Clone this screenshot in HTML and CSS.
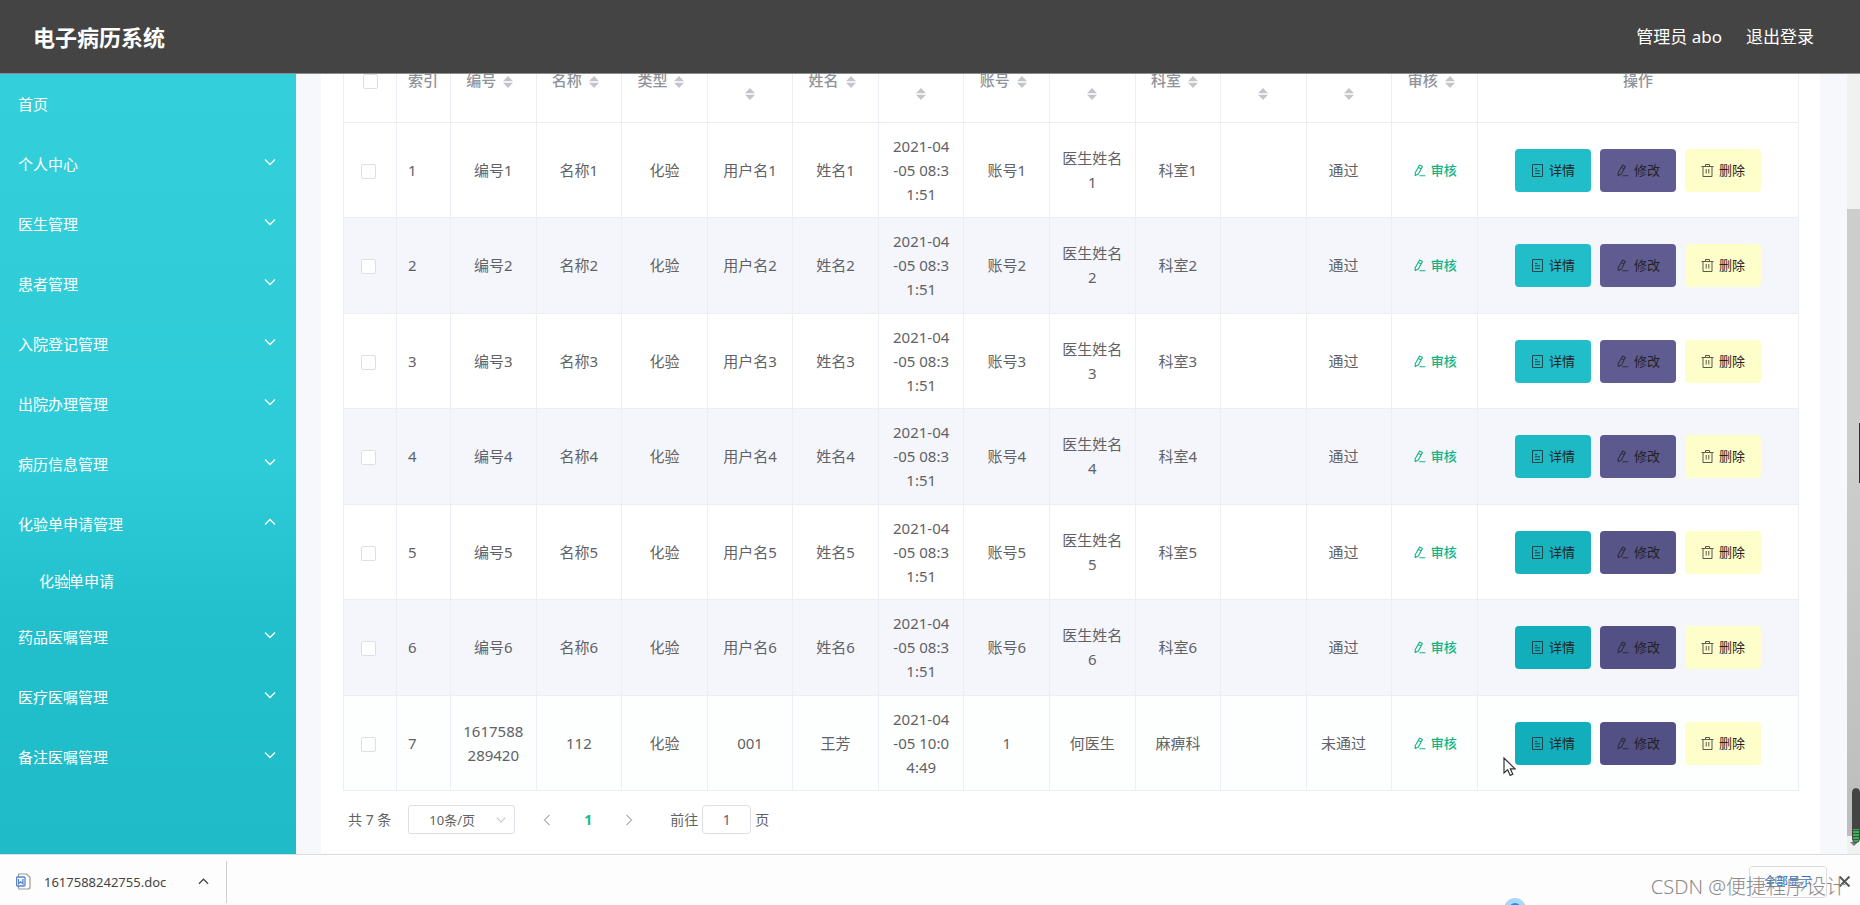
FILE: index.html
```html
<!DOCTYPE html>
<html lang="zh-CN">
<head>
<meta charset="utf-8">
<title>电子病历系统</title>
<link rel="stylesheet" href="styles.css">
</head>
<body>
<svg class="sprite" aria-hidden="true">
  <symbol id="i-down" viewBox="0 0 12 12"><path d="M1 3.5 6 8.5 11 3.5" fill="none" stroke="currentColor" stroke-width="1.3"/></symbol>
  <symbol id="i-up" viewBox="0 0 12 12"><path d="M1 8.5 6 3.5 11 8.5" fill="none" stroke="currentColor" stroke-width="1.3"/></symbol>
  <symbol id="i-left" viewBox="0 0 12 12"><path d="M8.5 1 3.5 6 8.5 11" fill="none" stroke="currentColor" stroke-width="1.4"/></symbol>
  <symbol id="i-right" viewBox="0 0 12 12"><path d="M3.5 1 8.5 6 3.5 11" fill="none" stroke="currentColor" stroke-width="1.4"/></symbol>
  <symbol id="i-sort" viewBox="0 0 10 12"><path d="M5 0 10 5.2H0zM5 12 0 6.8h10z" fill="currentColor"/></symbol>
  <symbol id="i-edit" viewBox="0 0 13 13"><path d="M6.6 1 9.4 2.4 5.4 10 2.2 11.6 2.2 8.8zM5.4 3.4 8 4.8M6.4 11.8H12.4" fill="none" stroke="currentColor" stroke-width="1.1" stroke-linejoin="round"/></symbol>
  <symbol id="i-doc" viewBox="0 0 13 13"><path d="M1.5.5h10v12h-10zM4 4.5h2.2M4 6.8h5M4 9.5h5" fill="none" stroke="currentColor" stroke-width="1"/></symbol>
  <symbol id="i-trash" viewBox="0 0 13 13"><path d="M.5 2.5h12M2 2.5v10h9v-10M4.5 2.5v-2h4v2M5.2 5v4.5M7.8 5v4.5" fill="none" stroke="currentColor" stroke-width="1"/></symbol>
</svg>

<header class="topbar">
  <h1 class="brand">电子病历系统</h1>
  <nav class="account"><span>管理员 abo</span><a href="#logout">退出登录</a></nav>
</header>

<div class="middle">
  <nav class="sidebar">
    <a class="item" href="#home">首页</a>
    <button class="item" type="button">个人中心<svg class="chev"><use href="#i-down"/></svg></button>
    <button class="item" type="button">医生管理<svg class="chev"><use href="#i-down"/></svg></button>
    <button class="item" type="button">患者管理<svg class="chev"><use href="#i-down"/></svg></button>
    <button class="item" type="button">入院登记管理<svg class="chev"><use href="#i-down"/></svg></button>
    <button class="item" type="button">出院办理管理<svg class="chev"><use href="#i-down"/></svg></button>
    <button class="item" type="button">病历信息管理<svg class="chev"><use href="#i-down"/></svg></button>
    <button class="item" type="button" aria-expanded="true">化验单申请管理<svg class="chev"><use href="#i-up"/></svg></button>
    <a class="item sub" href="#lab">化验单申请<i class="ibeam"></i></a>
    <button class="item" type="button">药品医嘱管理<svg class="chev"><use href="#i-down"/></svg></button>
    <button class="item" type="button">医疗医嘱管理<svg class="chev"><use href="#i-down"/></svg></button>
    <button class="item" type="button">备注医嘱管理<svg class="chev"><use href="#i-down"/></svg></button>
  </nav>

  <main class="content">
    <section class="panel">
      <table class="grid">
        <colgroup><col class="c-check"><col class="c-index"><col span="12"><col class="c-ops"></colgroup>
        <thead>
          <tr>
            <th><input class="check" type="checkbox" aria-label="全选"></th>
            <th class="left">索引</th>
            <th>编号<span class="sort"><svg><use href="#i-sort"/></svg></span></th>
            <th>名称<span class="sort"><svg><use href="#i-sort"/></svg></span></th>
            <th>类型<span class="sort"><svg><use href="#i-sort"/></svg></span></th>
            <th><br><span class="sort"><svg><use href="#i-sort"/></svg></span></th>
            <th>姓名<span class="sort"><svg><use href="#i-sort"/></svg></span></th>
            <th><br><span class="sort"><svg><use href="#i-sort"/></svg></span></th>
            <th>账号<span class="sort"><svg><use href="#i-sort"/></svg></span></th>
            <th><br><span class="sort"><svg><use href="#i-sort"/></svg></span></th>
            <th>科室<span class="sort"><svg><use href="#i-sort"/></svg></span></th>
            <th><br><span class="sort"><svg><use href="#i-sort"/></svg></span></th>
            <th><br><span class="sort"><svg><use href="#i-sort"/></svg></span></th>
            <th>审核<span class="sort"><svg><use href="#i-sort"/></svg></span></th>
            <th>操作</th>
          </tr>
        </thead>
        <tbody>
          <tr><td class="pick"><input class="check" type="checkbox" aria-label="选择 1"></td><td class="left">1</td><td>编号1</td><td>名称1</td><td>化验</td><td>用户名1</td><td>姓名1</td><td>2021-04<br>-05 08:3<br>1:51</td><td>账号1</td><td>医生姓名<br>1</td><td>科室1</td><td></td><td class="state">通过</td><td><button class="audit" type="button"><svg><use href="#i-edit"/></svg>审核</button></td><td><div class="ops"><button class="btn view" type="button"><svg><use href="#i-doc"/></svg>详情</button><button class="btn edit" type="button"><svg><use href="#i-edit"/></svg>修改</button><button class="btn del" type="button"><svg><use href="#i-trash"/></svg>删除</button></div></td></tr>
          <tr><td class="pick"><input class="check" type="checkbox" aria-label="选择 2"></td><td class="left">2</td><td>编号2</td><td>名称2</td><td>化验</td><td>用户名2</td><td>姓名2</td><td>2021-04<br>-05 08:3<br>1:51</td><td>账号2</td><td>医生姓名<br>2</td><td>科室2</td><td></td><td class="state">通过</td><td><button class="audit" type="button"><svg><use href="#i-edit"/></svg>审核</button></td><td><div class="ops"><button class="btn view" type="button"><svg><use href="#i-doc"/></svg>详情</button><button class="btn edit" type="button"><svg><use href="#i-edit"/></svg>修改</button><button class="btn del" type="button"><svg><use href="#i-trash"/></svg>删除</button></div></td></tr>
          <tr><td class="pick"><input class="check" type="checkbox" aria-label="选择 3"></td><td class="left">3</td><td>编号3</td><td>名称3</td><td>化验</td><td>用户名3</td><td>姓名3</td><td>2021-04<br>-05 08:3<br>1:51</td><td>账号3</td><td>医生姓名<br>3</td><td>科室3</td><td></td><td class="state">通过</td><td><button class="audit" type="button"><svg><use href="#i-edit"/></svg>审核</button></td><td><div class="ops"><button class="btn view" type="button"><svg><use href="#i-doc"/></svg>详情</button><button class="btn edit" type="button"><svg><use href="#i-edit"/></svg>修改</button><button class="btn del" type="button"><svg><use href="#i-trash"/></svg>删除</button></div></td></tr>
          <tr><td class="pick"><input class="check" type="checkbox" aria-label="选择 4"></td><td class="left">4</td><td>编号4</td><td>名称4</td><td>化验</td><td>用户名4</td><td>姓名4</td><td>2021-04<br>-05 08:3<br>1:51</td><td>账号4</td><td>医生姓名<br>4</td><td>科室4</td><td></td><td class="state">通过</td><td><button class="audit" type="button"><svg><use href="#i-edit"/></svg>审核</button></td><td><div class="ops mid"><button class="btn view" type="button"><svg><use href="#i-doc"/></svg>详情</button><button class="btn edit" type="button"><svg><use href="#i-edit"/></svg>修改</button><button class="btn del" type="button"><svg><use href="#i-trash"/></svg>删除</button></div></td></tr>
          <tr><td class="pick"><input class="check" type="checkbox" aria-label="选择 5"></td><td class="left">5</td><td>编号5</td><td>名称5</td><td>化验</td><td>用户名5</td><td>姓名5</td><td>2021-04<br>-05 08:3<br>1:51</td><td>账号5</td><td>医生姓名<br>5</td><td>科室5</td><td></td><td class="state">通过</td><td><button class="audit" type="button"><svg><use href="#i-edit"/></svg>审核</button></td><td><div class="ops deep"><button class="btn view" type="button"><svg><use href="#i-doc"/></svg>详情</button><button class="btn edit" type="button"><svg><use href="#i-edit"/></svg>修改</button><button class="btn del" type="button"><svg><use href="#i-trash"/></svg>删除</button></div></td></tr>
          <tr><td class="pick"><input class="check" type="checkbox" aria-label="选择 6"></td><td class="left">6</td><td>编号6</td><td>名称6</td><td>化验</td><td>用户名6</td><td>姓名6</td><td>2021-04<br>-05 08:3<br>1:51</td><td>账号6</td><td>医生姓名<br>6</td><td>科室6</td><td></td><td class="state">通过</td><td><button class="audit" type="button"><svg><use href="#i-edit"/></svg>审核</button></td><td><div class="ops deeper"><button class="btn view" type="button"><svg><use href="#i-doc"/></svg>详情</button><button class="btn edit" type="button"><svg><use href="#i-edit"/></svg>修改</button><button class="btn del" type="button"><svg><use href="#i-trash"/></svg>删除</button></div></td></tr>
          <tr class="hovered"><td class="pick"><input class="check" type="checkbox" aria-label="选择 7"></td><td class="left">7</td><td>1617588<br>289420</td><td>112</td><td>化验</td><td>001</td><td>王芳</td><td>2021-04<br>-05 10:0<br>4:49</td><td>1</td><td>何医生</td><td>麻痹科</td><td></td><td class="state">未通过</td><td><button class="audit" type="button"><svg><use href="#i-edit"/></svg>审核</button></td><td><div class="ops deeper"><button class="btn view" type="button"><svg><use href="#i-doc"/></svg>详情</button><button class="btn edit" type="button"><svg><use href="#i-edit"/></svg>修改</button><button class="btn del" type="button"><svg><use href="#i-trash"/></svg>删除</button></div></td></tr>
        </tbody>
      </table>

      <div class="pager">
        <span class="total">共 7 条</span>
        <div class="size">
          <select aria-label="每页条数"><option>10条/页</option></select>
          <svg><use href="#i-down"/></svg>
        </div>
        <button class="step" type="button" aria-label="上一页"><svg><use href="#i-left"/></svg></button>
        <button class="step current" type="button">1</button>
        <button class="step" type="button" aria-label="下一页"><svg><use href="#i-right"/></svg></button>
        <label class="jump">前往<input type="text" value="1">页</label>
      </div>
    </section>
  </main>

  <div class="scrollbar">
    <div class="thumb"></div>
    <svg class="arrow" viewBox="0 0 8 4"><path d="M0 0h8L4 4z" fill="#777"/></svg>
    <i class="edge"></i>
    <i class="meter"></i>
  </div>
</div>

<footer class="downloads">
  <div class="file">
    <svg class="word" viewBox="0 0 15 17"><path d="M3.5 1h7l3.5 3.2V14a2 2 0 0 1-2 2H3.5a1 1 0 0 1-1-1V2a1 1 0 0 1 1-1z" fill="#fff" stroke="#999" stroke-width="1.2"/><rect x=".5" y="4" width="8.5" height="9" rx="1" fill="#fff" stroke="#5583cb" stroke-width="1.3"/><path d="M2.5 6v4.8l2.2-2 2.2 2V6" fill="none" stroke="#5583cb" stroke-width="1.3"/></svg>
    <span class="name">1617588242755.doc</span>
    <button class="more" type="button" aria-label="更多"><svg><use href="#i-up"/></svg></button>
  </div>
  <button class="all" type="button">全部显示</button>
  <button class="close" type="button" aria-label="关闭"><svg viewBox="0 0 10 10"><path d="M.5.5l9 9M9.5.5l-9 9" stroke="#555" stroke-width="1.8"/></svg></button>
  <span class="watermark">CSDN @便捷程序设计</span>
  <i class="bubble"></i>
</footer>

<svg class="pointer" viewBox="0 0 13 20"><path d="M1 1v15l3.6-3.2 2.6 5.6 2.6-1.2-2.5-5.4H12z" fill="#fff" stroke="#333" stroke-width="1.2"/></svg>
</body>
</html>
```

FILE: styles.css
```css
* { box-sizing: border-box; }

body {
  margin: 0;
  height: 100vh;
  display: flex;
  flex-direction: column;
  overflow: hidden;
  position: relative;
  background: #fff;
  color: #606266;
  font: 15px/24px "Noto Sans", "Noto Sans CJK SC", sans-serif;
}

button, input, select {
  margin: 0;
  padding: 0;
  border: 0;
  background: none;
  color: inherit;
  font: inherit;
}

a { color: inherit; text-decoration: none; }
svg { display: block; }
.sprite { display: none; }

/* top bar */
.topbar {
  flex: none;
  display: flex;
  align-items: center;
  justify-content: space-between;
  height: 74px;
  padding: 0 46px 0 33px;
  border-bottom: 1px solid #8a8a8a;
  background: #444;
  color: #fff;
}
.brand { margin: 0; font-size: 22px; font-weight: 700; }
.account { display: flex; gap: 24px; font-size: 17px; }

.middle { flex: 1; min-height: 0; display: flex; }

/* side menu */
.sidebar {
  flex: none;
  width: 296px;
  background: linear-gradient(#33cfdb, #2eccd8 50%, #22c0cc 70%, #1fbbc8);
  color: #fff;
}
.item {
  display: flex;
  align-items: center;
  justify-content: space-between;
  width: 100%;
  height: 60px;
  padding: 0 20px 0 18px;
  text-align: left;
}
.item.sub { position: relative; height: 53px; padding-left: 39px; }
.chev { width: 12px; height: 12px; margin-bottom: 4px; }
.ibeam { position: absolute; left: 69px; top: 16px; width: 1px; height: 20px; background: #fff; }

/* content */
.content {
  flex: 1;
  min-width: 0;
  overflow: hidden;
  padding: 0 27px 0 25px;
  background: #f6f8fb;
}
.panel { min-height: 100%; padding: 0 21px 0 22px; background: #fff; }

.grid {
  width: 100%;
  margin-top: -36px;
  table-layout: fixed;
  border-spacing: 0;
  border-left: 1px solid #ebeef5;
}
.c-check { width: 53px; }
.c-index { width: 54px; }
.c-ops { width: 321px; }
.grid th, .grid td {
  padding: 11px 0;
  border-right: 1px solid #ebeef5;
  border-bottom: 1px solid #ebeef5;
  text-align: center;
  vertical-align: middle;
}
.grid th { height: 85px; padding: 0; color: #909399; font-weight: 500; }
.grid tr:nth-child(even) td { padding-bottom: 12px; background: #f5f6fb; }
.grid tr.hovered td { background: #fdfffe; }
.grid .left { padding-left: 11px; text-align: left; }
.grid .pick { padding-left: 17px; text-align: left; }
.grid .state { padding-right: 11px; }

.sort { display: inline-block; width: 24px; vertical-align: middle; color: #c3c5ca; }
.sort svg { width: 10px; height: 12px; margin: 0 auto; }

.check {
  appearance: none;
  display: inline-block;
  width: 15px;
  height: 15px;
  border: 1px solid #dcdfe6;
  border-radius: 2px;
  background: #fff;
  vertical-align: middle;
}

.audit, .btn {
  display: inline-flex;
  align-items: center;
  justify-content: center;
  gap: 5px;
  font-size: 13px;
  line-height: 20px;
}
.audit { color: #14b385; font-weight: 500; vertical-align: top; line-height: 24px; }
.audit svg, .btn svg { width: 13px; height: 13px; }

.ops { display: flex; justify-content: center; gap: 9px; }
.btn { width: 76px; height: 43px; border-radius: 4px; color: #222; }
.btn svg { opacity: .75; }
.view { background: #21bdc9; }
.edit { background: #605c92; }
.del { background: #fefecb; }
.mid .view { background: #1dbac6; }
.mid .edit { background: #5c598e; }
.deep .view { background: #17b3bf; }
.deep .edit { background: #575488; }
.deeper .view { background: #12aebb; }
.deeper .edit { background: #535085; }

/* pagination */
.pager {
  display: flex;
  align-items: center;
  padding: 14px 5px 19px;
  font-size: 14px;
}
.size { position: relative; width: 107px; margin: 0 16px 0 17px; }
.size select {
  appearance: none;
  display: block;
  width: 100%;
  height: 29px;
  padding-left: 20px;
  border: 1px solid #dcdfe6;
  border-radius: 3px;
  font-size: 13px;
}
.size svg { position: absolute; right: 9px; top: 10px; width: 10px; height: 10px; color: #c0c4cc; }
.step { display: flex; align-items: center; justify-content: center; width: 32px; height: 29px; margin-right: 9px; color: #b4b8c0; }
.step svg { width: 12px; height: 12px; }
.step.current { color: #14b98a; font-weight: 700; }
.jump { display: flex; align-items: center; gap: 4px; margin-left: 16px; }
.jump input { width: 49px; height: 29px; border: 1px solid #dcdfe6; border-radius: 4px; text-align: center; }

/* scrollbar */
.scrollbar {
  position: relative;
  flex: none;
  display: flex;
  flex-direction: column;
  align-items: center;
  width: 13px;
  padding-top: 135px;
  background: #f1f1f1;
}
.thumb { flex: 1; width: 100%; background: linear-gradient(#cdcdcd 40%, #bdbdbd); }
.arrow { width: 8px; height: 4px; margin: 6px 0 8px; }
.edge { position: absolute; right: 0; top: 349px; width: 1px; height: 60px; background: #333; }
.meter {
  position: absolute;
  right: 0;
  bottom: 11px;
  width: 8px;
  height: 55px;
  border: 1px solid #444;
  border-radius: 4px;
  background: linear-gradient(#444 40px, transparent 40px), repeating-linear-gradient(#3fae5a 0 2px, #2c5c38 2px 3px);
}

/* download shelf */
.downloads {
  position: relative;
  flex: none;
  display: flex;
  align-items: center;
  height: 51px;
  padding: 3px 10px 0 0;
  border-top: 1px solid #dcdddf;
  background: #fdfdfd;
}
.file {
  display: flex;
  align-items: center;
  width: 227px;
  height: 42px;
  padding: 0 17px 0 16px;
  border-right: 1px solid #cfcfcf;
  color: #444;
  font-size: 13px;
}
.word { width: 15px; height: 17px; margin-right: 13px; }
.name { flex: 1; }
.more svg { width: 11px; height: 11px; color: #444; }
.all {
  width: 78px;
  height: 32px;
  margin-left: auto;
  border: 1px solid #dadce0;
  border-radius: 4px;
  color: #2a6fd0;
  font-size: 12px;
}
.close { margin-left: 12px; }
.close svg { width: 11px; height: 11px; }
.watermark {
  position: absolute;
  right: 14px;
  bottom: 6px;
  color: #8a8a8a;
  font-size: 20px;
  font-weight: 300;
  pointer-events: none;
}
.bubble {
  position: absolute;
  left: 1504px;
  top: 43px;
  width: 22px;
  height: 22px;
  border: 5px solid #a9d6fb;
  border-radius: 50%;
  background: #1890f5;
  clip-path: inset(0 0 14px 0);
}

.pointer { position: absolute; left: 1503px; top: 757px; width: 13px; height: 20px; }
```
